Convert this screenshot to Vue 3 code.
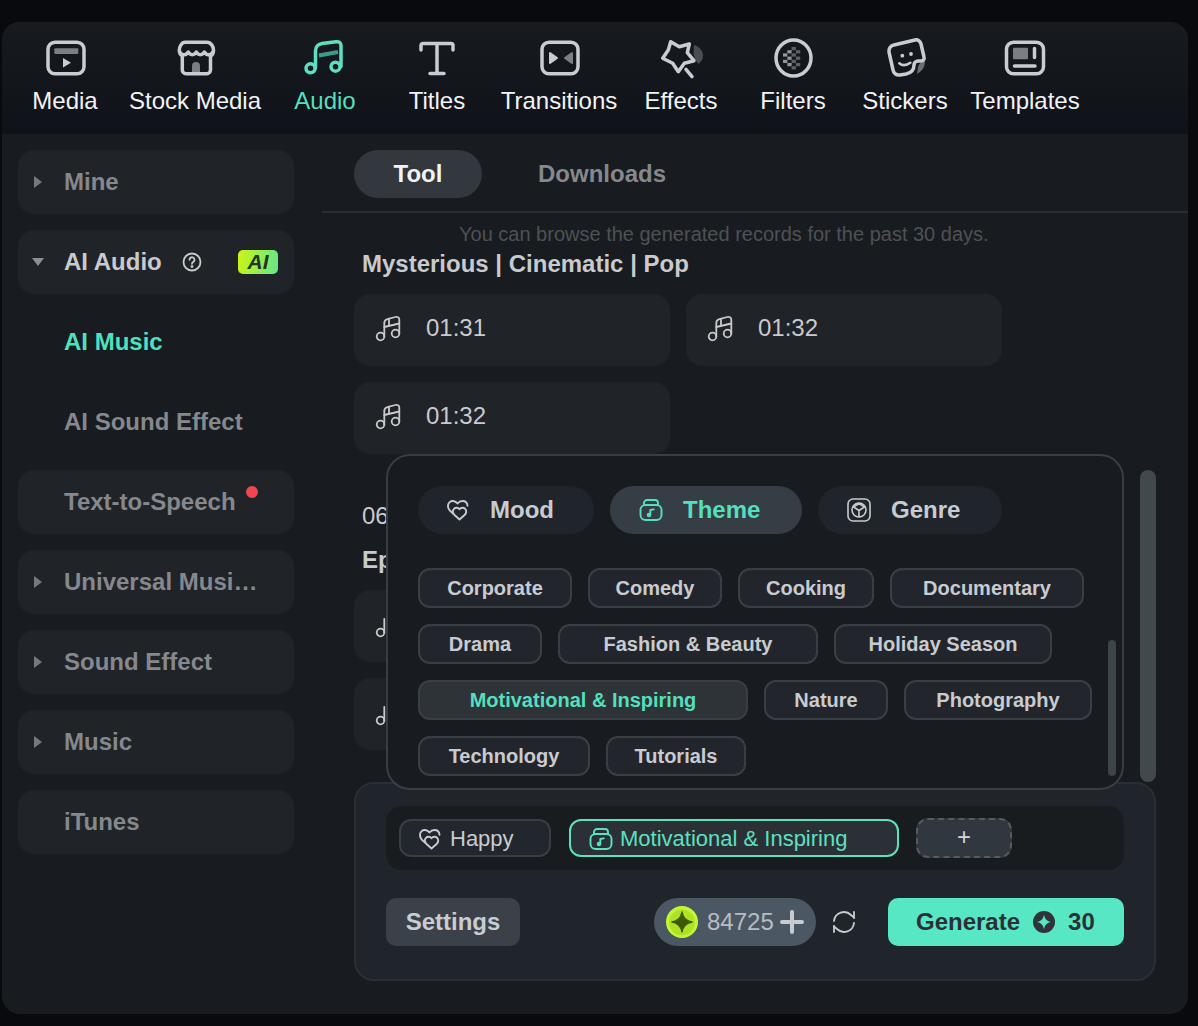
<script setup>
const tools = [
  { name: 'Media', w: 120, icon: 'media' },
  { name: 'Stock Media', w: 140, icon: 'stock' },
  { name: 'Audio', w: 120, icon: 'audio', active: true },
  { name: 'Titles', w: 104, icon: 'titles' },
  { name: 'Transitions', w: 140, icon: 'transitions' },
  { name: 'Effects', w: 104, icon: 'effects' },
  { name: 'Filters', w: 120, icon: 'filters' },
  { name: 'Stickers', w: 104, icon: 'stickers' },
  { name: 'Templates', w: 136, icon: 'templates' }
]
const checker = []
const grid = ['..x.', '.x.x', 'x.x.', '.x.x', 'x.x.', '.x.x', '..x.']
grid.forEach((row, y) => {
  row.split('').forEach((c, x) => {
    if (c === 'x') checker.push({ x: 10 + x * 4.3, y: 9 + y * 3.2, o: x < 2 ? 0.95 : 0.55 })
  })
})
const nav = [
  { label: 'Mine', arrow: 'right', box: true },
  { label: 'AI Audio', arrow: 'down', box: true, open: true },
  { label: 'AI Music', sub: true, active: true },
  { label: 'AI Sound Effect', sub: true },
  { label: 'Text-to-Speech', box: true, dot: true },
  { label: 'Universal Musi…', arrow: 'right', box: true },
  { label: 'Sound Effect', arrow: 'right', box: true },
  { label: 'Music', arrow: 'right', box: true },
  { label: 'iTunes', box: true }
]
const chipRows = [
  [{ t: 'Corporate', w: 154 }, { t: 'Comedy', w: 134 }, { t: 'Cooking', w: 136 }, { t: 'Documentary', w: 194 }],
  [{ t: 'Drama', w: 124 }, { t: 'Fashion & Beauty', w: 260 }, { t: 'Holiday Season', w: 218 }],
  [{ t: 'Motivational & Inspiring', w: 330, on: true }, { t: 'Nature', w: 124 }, { t: 'Photography', w: 188 }],
  [{ t: 'Technology', w: 172 }, { t: 'Tutorials', w: 140 }]
]
</script>

<template>
  <div class="page">
    <div class="window">
      <header class="topbar">
        <div v-for="tool in tools" :key="tool.name" class="tool" :class="{ on: tool.active }" :style="{ width: tool.w + 'px' }">
          <svg class="tool-icon" viewBox="0 0 40 40" fill="none" stroke="currentColor" stroke-width="3.500" stroke-linecap="round" stroke-linejoin="round">
            <template v-if="tool.icon === 'media'">
              <rect x="3" y="4.200" width="36" height="31.600" rx="7" />
              <rect x="9.300" y="10.300" width="24" height="5.700" rx="1" fill="#7b7e85" stroke="none" />
              <path d="M18 20l8 4.700-8 4.700z" fill="currentColor" stroke="none" />
            </template>
            <template v-else-if="tool.icon === 'stock'">
              <path d="M10 4.200h22c4 0 6.500 4.500 6.500 8 0 3-1.500 5-3 6V32a3.700 3.700 0 0 1-3.700 3.700H11A3.700 3.700 0 0 1 7.300 32V18c-1.500-1-3-3-3-5.800 0-3.500 2.500-8 5.700-8z" />
              <path d="M5 14.500c2.500 3 6 3 8.300-.5 2 3.500 6 3.500 8 0 2 3.500 6 3.500 8 0 2.300 3.500 5.800 3.500 8.200.5" />
              <path d="M17 34v-6a4 4 0 0 1 8 0v6z" fill="#7b7e85" stroke="none" />
            </template>
            <template v-else-if="tool.icon === 'audio'">
              <circle cx="5.500" cy="30.300" r="4.500" />
              <circle cx="30.500" cy="28.700" r="4.500" />
              <path d="M10.500 30V13c0-4.500 3-7 6.500-7.500l14-1.800c3-.3 5 1 5 3.800v21" />
              <path d="M14 17.500l19-3.500" stroke="#3d9c87" stroke-width="4" stroke-linecap="butt" />
            </template>
            <template v-else-if="tool.icon === 'titles'">
              <path d="M4 12V7.500a2 2 0 0 1 2-2h28a2 2 0 0 1 2 2V12M20 5.500v30M13 35.500h14" />
            </template>
            <template v-else-if="tool.icon === 'transitions'">
              <rect x="3" y="4.200" width="36" height="31.600" rx="7" />
              <path d="M11 15v10l7-5z" fill="currentColor" stroke-width="2" />
              <path d="M33 15v10l-7-5z" fill="#7b7e85" stroke="#7b7e85" stroke-width="2" />
            </template>
            <template v-else-if="tool.icon === 'effects'">
              <path d="M33 7c6 2 9 6 9 11 0 3-2 6-4.500 8l-3-4-2-6z" fill="#4a4d52" stroke="none" />
              <path d="M9.700 3.700L18.300 8.700 28.300 6 26.300 14.700 33 22.700 23.300 25.300 17.300 33.700 11.700 25.300 1.700 20.300 7.300 12z" />
              <path d="M25 31.300l6 7.400" />
            </template>
            <template v-else-if="tool.icon === 'filters'">
              <ellipse cx="20.500" cy="20" rx="17.500" ry="18" />
              <rect v-for="(c, i) in checker" :key="i" :x="c.x" :y="c.y" width="4.300" height="3.200" fill="#9a9da3" :opacity="c.o" stroke="none" />
            </template>
            <template v-else-if="tool.icon === 'stickers'">
              <path d="M40 23c0 6-3 10-8 13l1-7c.5-3 3-5 7-6z" fill="#6b6e74" stroke="none" />
              <path d="M9 7L30 2a5 5 0 0 1 6 4l3 13a3 3 0 0 1-3 4h-3a4 4 0 0 0-4 4c0 5-3 8-8 9l-6 1a6 6 0 0 1-7-5L4 14a6 6 0 0 1 5-7z" />
              <circle cx="17.300" cy="17.700" r="1.900" fill="currentColor" stroke="none" />
              <circle cx="26" cy="16" r="1.900" fill="currentColor" stroke="none" />
              <path d="M14.300 25.300c3 2.500 7 2.300 11-.5" stroke-width="2.600" />
            </template>
            <template v-else>
              <rect x="1.500" y="4.200" width="37" height="31.600" rx="7" />
              <rect x="8" y="9.700" width="15" height="11.600" rx="1" fill="#7b7e85" stroke="none" />
              <path d="M29.500 10.500v9M9.500 28h20.500" />
            </template>
          </svg>
          <span class="tool-label">{{ tool.name }}</span>
        </div>
      </header>

      <div class="body">
        <aside class="sidebar">
          <div v-for="item in nav" :key="item.label" class="nav" :class="{ box: item.box, active: item.active, open: item.open }">
            <span v-if="item.arrow" class="arrow" :class="item.arrow"></span>
            <span>{{ item.label }}</span>
            <svg v-if="item.open" class="help" viewBox="0 0 20 20" fill="none" stroke="currentColor" stroke-width="1.800" stroke-linecap="round">
              <circle cx="10" cy="10" r="8.500" />
              <path d="M7.500 7.800a2.500 2.500 0 1 1 3.800 2.100c-.9.500-1.300 1-1.300 1.900" />
              <circle cx="10" cy="14.500" r=".6" fill="currentColor" />
            </svg>
            <span v-if="item.open" class="ai-badge">AI</span>
            <span v-if="item.dot" class="dot"></span>
          </div>
        </aside>

        <main class="main">
          <div class="tabs">
            <div class="tab on">Tool</div>
            <div class="tab">Downloads</div>
          </div>

          <div class="list">
            <p class="note">You can browse the generated records for the past 30 days.</p>
            <h3 class="group">Mysterious | Cinematic | Pop</h3>
            <div class="cards">
              <div v-for="(d, i) in ['01:31', '01:32', '01:32']" :key="i" class="card">
                <svg class="note-icon" viewBox="0 0 28 28" fill="none" stroke="currentColor" stroke-width="1.800" stroke-linecap="round" stroke-linejoin="round">
                  <circle cx="5.500" cy="22.500" r="3.800" />
                  <circle cx="20.500" cy="19.500" r="3.800" />
                  <path d="M9.300 22.500V9c0-2 1-3.300 3-3.800l8-2.200c2-.5 4 .3 4 2.500v14" />
                  <path d="M9.300 13l15-3.500" />
                  <path d="M14 5v6" />
                </svg>
                <span>{{ d }}</span>
              </div>
            </div>
            <div class="date">06</div>
            <h3 class="group second">Ep</h3>
            <div class="cards">
              <div v-for="i in 2" :key="i" class="card wide">
                <svg class="note-icon" viewBox="0 0 28 28" fill="none" stroke="currentColor" stroke-width="1.800" stroke-linecap="round" stroke-linejoin="round">
                  <circle cx="5.500" cy="22.500" r="3.800" />
                  <path d="M9.300 22.500V9" />
                </svg>
              </div>
            </div>
          </div>

          <div class="outer-scroll"></div>

          <section class="panel">
            <div class="tag-bar">
              <div class="tag">
                <svg class="mini" viewBox="0 0 24 24" fill="none" stroke="currentColor" stroke-width="1.900" stroke-linecap="round" stroke-linejoin="round">
                  <path d="M7 15.500C3.500 13 1.800 10.500 2 7.500 2.200 4.800 4.500 2.700 7.200 3c1.800.2 3.300 1 4.300 2.500C12.800 3.800 14.500 3 16.500 3c2.800 0 4.800 2 5 4.800" />
                  <path d="M13.500 21.500l-5-4.500c-2-1.800-2.200-4.500-.5-6.200 1.500-1.500 4-1.500 5.500.5 1.500-2 4-2 5.600-.5 1.700 1.700 1.500 4.400-.5 6.200z" />
                </svg>
                <span>Happy</span>
              </div>
              <div class="tag tag-on">
                <svg class="mini" viewBox="0 0 24 24" fill="none" stroke="currentColor" stroke-width="1.900" stroke-linecap="round" stroke-linejoin="round">
                  <rect x="1.500" y="7" width="21" height="15" rx="5" />
                  <path d="M5 7V5a3 3 0 0 1 3-3h8a3 3 0 0 1 3 3v2" />
                  <circle cx="10" cy="17" r="1.300" />
                  <path d="M11.300 17v-5l3.500-.6" />
                </svg>
                <span>Motivational &amp; Inspiring</span>
              </div>
              <div class="tag-add">+</div>
            </div>
            <div class="actions">
              <div class="settings">Settings</div>
              <div class="coins">
                <svg class="coin" viewBox="0 0 32 32">
                  <circle cx="16" cy="16" r="16" fill="#c5f53a" />
                  <circle cx="16" cy="16.500" r="13" fill="#aee324" />
                  <path d="M16 6c1 6 4 9 10 10-6 1-9 4-10 10-1-6-4-9-10-10 6-1 9-4 10-10z" fill="#3f5a07" stroke="#3f5a07" stroke-width="1.500" stroke-linejoin="round" />
                </svg>
                <span class="coin-num">84725</span>
                <svg class="coin-plus" viewBox="0 0 24 24"><path d="M12 2v20M2 12h20" stroke="#c8ccd1" stroke-width="4" stroke-linecap="round" /></svg>
              </div>
              <svg class="refresh" viewBox="0 0 24 24" fill="none" stroke="#c8ccd1" stroke-width="1.800" stroke-linecap="round">
                <path d="M2 11a10 10 0 0 1 17-6l3 2.500" />
                <path d="M22 2v6" />
                <path d="M22 13a10 10 0 0 1-17 6l-3-2.500" />
                <path d="M2 22v-6" />
              </svg>
              <div class="generate">
                <span>Generate</span>
                <svg class="gen-icon" viewBox="0 0 22 22">
                  <circle cx="11" cy="11" r="11" fill="#2f343a" />
                  <path d="M11 3.500c.7 4.500 3 6.800 7.500 7.500-4.500.7-6.800 3-7.500 7.500-.7-4.500-3-6.800-7.500-7.500 4.500-.7 6.800-3 7.500-7.500z" fill="#58e7c4" />
                </svg>
                <span>30</span>
              </div>
            </div>
          </section>

          <div class="popup">
            <div class="pop-tabs">
              <div class="pop-tab mood">
                <svg class="pop-icon" viewBox="0 0 24 24" fill="none" stroke="currentColor" stroke-width="1.900" stroke-linecap="round" stroke-linejoin="round">
                  <path d="M7 15.500C3.500 13 1.800 10.500 2 7.500 2.200 4.800 4.500 2.700 7.200 3c1.800.2 3.300 1 4.300 2.500C12.800 3.800 14.500 3 16.500 3c2.800 0 4.800 2 5 4.800" />
                  <path d="M13.500 21.500l-5-4.500c-2-1.800-2.200-4.500-.5-6.200 1.500-1.500 4-1.500 5.500.5 1.500-2 4-2 5.600-.5 1.700 1.700 1.500 4.400-.5 6.200z" />
                </svg>
                <span>Mood</span>
              </div>
              <div class="pop-tab theme">
                <svg class="pop-icon" viewBox="0 0 24 24" fill="none" stroke="currentColor" stroke-width="1.900" stroke-linecap="round" stroke-linejoin="round">
                  <rect x="1.500" y="7" width="21" height="15" rx="5" />
                  <path d="M5 7V5a3 3 0 0 1 3-3h8a3 3 0 0 1 3 3v2" />
                  <circle cx="10" cy="17" r="1.300" />
                  <path d="M11.300 17v-5l3.500-.6" />
                </svg>
                <span>Theme</span>
              </div>
              <div class="pop-tab genre">
                <svg class="pop-icon" viewBox="0 0 24 24" fill="none" stroke="currentColor" stroke-width="1.600" stroke-linejoin="round">
                  <rect x="1" y="1" width="22" height="22" rx="5" />
                  <circle cx="12" cy="12" r="7" />
                  <path d="M12 5.500l5.500 3.500L12 12.500 6.500 9zM12 12.500V19" />
                </svg>
                <span>Genre</span>
              </div>
            </div>
            <div class="chips">
              <div v-for="(row, r) in chipRows" :key="r" class="chip-row">
                <div v-for="chip in row" :key="chip.t" class="chip" :class="{ on: chip.on }" :style="{ width: chip.w + 'px' }">{{ chip.t }}</div>
              </div>
            </div>
            <div class="inner-scroll"></div>
          </div>
        </main>
      </div>
    </div>
  </div>
</template>

<style>
html, body { margin: 0; background: #080a0d; }
</style>

<style scoped>
* { box-sizing: border-box; }
.page {
  width: 1198px;
  height: 1026px;
  padding: 22px 10px 12px 2px;
  background: #080a0d;
  font-family: "Liberation Sans", Arial, sans-serif;
}
.window {
  height: 992px;
  border-radius: 18px;
  overflow: hidden;
  display: flex;
  flex-direction: column;
  background: #181b1f;
}
.topbar {
  height: 112px;
  padding: 16px 0 0 3px;
  display: flex;
  flex: none;
  background: linear-gradient(#171b20, #0f1319);
}
.tool {
  display: flex;
  flex-direction: column;
  align-items: center;
  color: #c9ccd2;
}
.tool.on { color: #5ce0bf; }
.tool-icon { width: 40px; height: 40px; display: block; overflow: visible; }
.tool-label {
  margin-top: 9px;
  font-size: 24px;
  line-height: 28px;
  color: #f1f3f5;
  white-space: nowrap;
}
.tool.on .tool-label { color: #54dfbd; }
.body { flex: 1; display: flex; min-height: 0; }
.sidebar {
  width: 320px;
  flex: none;
  padding: 16px 28px 0 16px;
  display: flex;
  flex-direction: column;
  gap: 16px;
}
.nav {
  position: relative;
  height: 64px;
  padding-left: 46px;
  display: flex;
  align-items: center;
  border-radius: 16px;
  font-size: 24px;
  font-weight: 700;
  color: #85888d;
  white-space: nowrap;
}
.nav.box { background: #202327; }
.nav.open { color: #c8cacd; }
.nav.active { color: #4fe0bf; }
.arrow { position: absolute; }
.arrow.right {
  left: 16px;
  top: 26px;
  border-left: 8px solid #76797e;
  border-top: 6px solid transparent;
  border-bottom: 6px solid transparent;
}
.arrow.down {
  left: 14px;
  top: 28px;
  border-top: 8px solid #8b8e93;
  border-left: 6px solid transparent;
  border-right: 6px solid transparent;
}
.help { width: 20px; height: 20px; margin-left: 20px; }
.ai-badge {
  position: absolute;
  left: 220px;
  top: 20px;
  width: 40px;
  height: 24px;
  border-radius: 5px;
  background: linear-gradient(100deg, #cdf611, #62e68d);
  color: #23351a;
  font-size: 21px;
  font-style: italic;
  text-align: center;
  line-height: 24px;
}
.dot {
  position: absolute;
  left: 228px;
  top: 16px;
  width: 12px;
  height: 12px;
  border-radius: 50%;
  background: #f0474f;
}
.main {
  position: relative;
  flex: 1;
  display: flex;
  flex-direction: column;
  min-width: 0;
}
.tabs {
  flex: none;
  height: 79px;
  padding: 16px 32px 0;
  display: flex;
  gap: 56px;
  border-bottom: 2px solid #2a2d31;
}
.tab {
  height: 48px;
  font-size: 24px;
  font-weight: 700;
  line-height: 48px;
  color: #85888d;
}
.tab.on {
  width: 128px;
  border-radius: 24px;
  background: #33383e;
  color: #f1f3f5;
  text-align: center;
}
.list {
  flex: 1;
  min-height: 0;
  overflow: hidden;
  padding: 9px 0 0 32px;
}
.note {
  margin: 0 0 0 105px;
  font-size: 20px;
  line-height: 24px;
  color: #4e5156;
}
.group {
  margin: 4px 0 16px 8px;
  font-size: 24px;
  font-weight: 700;
  line-height: 28px;
  color: #c8cacd;
}
.group.second { margin-top: 16px; }
.cards {
  display: grid;
  grid-template-columns: 316px 316px;
  grid-auto-rows: 72px;
  gap: 16px;
}
.card {
  padding-left: 21px;
  padding-bottom: 4px;
  display: flex;
  align-items: center;
  gap: 23px;
  border-radius: 16px;
  background: #202327;
  font-size: 24px;
  color: #c8cacd;
}
.card.wide { grid-column: 1; }
.note-icon { width: 28px; height: 28px; flex: none; }
.date {
  margin: 48px 0 0 8px;
  font-size: 24px;
  line-height: 28px;
  color: #c8cacd;
}
.outer-scroll {
  position: absolute;
  left: 818px;
  top: 336px;
  width: 16px;
  height: 312px;
  border-radius: 8px;
  background: #41484e;
}
.panel {
  flex: none;
  height: 199px;
  margin: 0 32px 33px;
  padding: 22px 30px;
  border: 2px solid #2b2f34;
  border-radius: 20px;
  background: #20252b;
}
.tag-bar {
  height: 64px;
  padding-left: 13px;
  display: flex;
  align-items: center;
  gap: 18px;
  border-radius: 16px;
  background: #181c1f;
}
.tag {
  width: 152px;
  height: 38px;
  padding: 1px 0 0 17px;
  display: flex;
  align-items: center;
  gap: 8px;
  border: 2px solid #3a3e43;
  border-radius: 12px;
  background: #22272d;
  font-size: 22px;
  color: #c8cbd0;
}
.mini { width: 24px; height: 24px; flex: none; }
.tag-on {
  width: 330px;
  padding-left: 18px;
  gap: 7px;
  border-color: #5ce0bf;
  background: #2b3037;
  color: #5ce0bf;
}
.tag-add {
  width: 96px;
  height: 40px;
  margin-left: -1px;
  border: 2px dashed #565a60;
  border-radius: 12px;
  background: #31373e;
  color: #d5d7da;
  font-size: 24px;
  line-height: 34px;
  text-align: center;
}
.actions {
  margin-top: 28px;
  height: 48px;
  display: flex;
  align-items: center;
}
.settings {
  width: 134px;
  height: 48px;
  border-radius: 10px;
  background: #3b4148;
  color: #c9ccd1;
  font-size: 24px;
  font-weight: 700;
  line-height: 48px;
  text-align: center;
  margin-right: 134px;
}
.coins {
  width: 162px;
  height: 48px;
  padding-left: 12px;
  display: flex;
  align-items: center;
  border-radius: 24px;
  background: #4b5762;
}
.coin { width: 32px; height: 32px; flex: none; }
.coin-num { margin-left: 9px; font-size: 24px; color: #b8bcc2; }
.coin-plus { width: 24px; height: 24px; margin-left: 6px; flex: none; }
.refresh { width: 24px; height: 24px; margin: 0 31px 0 16px; flex: none; }
.generate {
  width: 236px;
  height: 48px;
  padding-left: 28px;
  display: flex;
  align-items: center;
  border-radius: 10px;
  background: #58e7c4;
  color: #2b3036;
  font-size: 24px;
  font-weight: 700;
  margin-left: 1px;
}
.gen-icon { width: 22px; height: 22px; margin: 0 13px; flex: none; }
.popup {
  position: absolute;
  left: 64px;
  top: 320px;
  width: 738px;
  height: 336px;
  padding: 30px;
  border: 2px solid #3a3e43;
  border-radius: 24px;
  background: #181c20;
}
.pop-tabs { display: flex; gap: 16px; }
.pop-tab {
  height: 48px;
  display: flex;
  align-items: center;
  border-radius: 24px;
  background: #1f252b;
  font-size: 24px;
  font-weight: 700;
  color: #c8cbd0;
}
.pop-icon { width: 24px; height: 24px; flex: none; margin-right: 20px; }
.mood { width: 176px; padding-left: 28px; }
.theme { width: 192px; padding-left: 29px; background: #363e45; color: #54dfbd; }
.genre { width: 184px; padding-left: 29px; }
.chips {
  margin-top: 34px;
  display: flex;
  flex-direction: column;
  gap: 16px;
}
.chip-row { display: flex; gap: 16px; }
.chip {
  height: 40px;
  border: 2px solid #3a3f45;
  border-radius: 12px;
  background: #22262c;
  color: #c8cbd0;
  font-size: 20px;
  font-weight: 700;
  line-height: 36px;
  text-align: center;
  white-space: nowrap;
}
.chip.on { background: #2e3338; color: #54dfbd; }
.inner-scroll {
  position: absolute;
  left: 720px;
  top: 184px;
  width: 8px;
  height: 136px;
  border-radius: 4px;
  background: #3d444a;
}
</style>
